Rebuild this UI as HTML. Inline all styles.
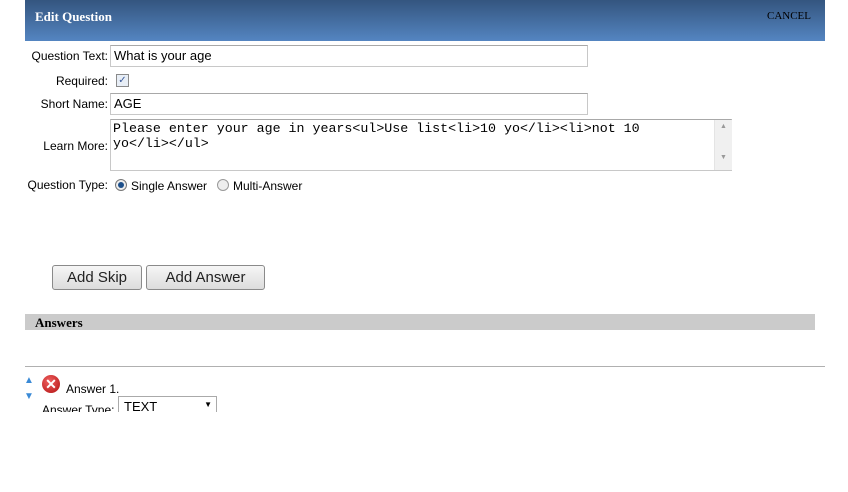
<!DOCTYPE html>
<html><head><style>
body{margin:0;width:848px;height:492px;background:#fff;font-family:"Liberation Sans",Arial,sans-serif;position:relative;overflow:hidden}
.a{position:absolute}
.lbl{position:absolute;right:740px;font-size:12px;color:#000;white-space:nowrap}
.inp{position:absolute;border:1px solid #c8c8c8;border-top-color:#a8a8a8;background:#fff;font-size:13px;box-sizing:border-box;padding:2px 3px}
.btn{position:absolute;border:1px solid #8a8a8a;border-radius:3px;background:linear-gradient(#f6f6f6,#dcdcdc);font-size:15px;color:#222;text-align:center;line-height:23px;box-sizing:border-box}
</style></head><body>
<div class="a" style="left:25px;top:0;width:800px;height:41px;background:linear-gradient(#34557f,#5485c1)"></div>
<div class="a" style="left:35px;top:9px;font-family:'Liberation Serif',serif;font-weight:bold;font-size:13px;color:#fff">Edit Question</div>
<div class="a" style="left:767px;top:10px;font-family:'Liberation Serif',serif;font-size:11px;color:#000">CANCEL</div>

<div class="lbl" style="top:49px">Question Text:</div>
<div class="inp" style="left:110px;top:45px;width:478px;height:22px">What is your age</div>
<div class="lbl" style="top:74px">Required:</div>
<div class="a" style="left:116px;top:74px;width:11px;height:11px;border:1px solid #8a8a8a;background:#e8eef6;font-size:10px;line-height:11px;text-align:center;color:#3a5a9a">✓</div>
<div class="lbl" style="top:97px">Short Name:</div>
<div class="inp" style="left:110px;top:93px;width:478px;height:22px">AGE</div>
<div class="lbl" style="top:139px">Learn More:</div>
<div class="inp" style="left:110px;top:119px;width:622px;height:52px;font-family:'Liberation Mono',monospace;font-size:13.3px;line-height:15px;padding:1px 2px 0 2px">Please enter your age in years&lt;ul&gt;Use list&lt;li&gt;10 yo&lt;/li&gt;&lt;li&gt;not 10<br>yo&lt;/li&gt;&lt;/ul&gt;</div>
<div class="a" style="left:714px;top:120px;width:17px;height:50px;background:#f0f0f0;border-left:1px solid #e4e4e4;font-size:7px;color:#999;text-align:center"><div style="margin-top:3px">▲</div><div style="margin-top:24px">▼</div></div>
<div class="lbl" style="top:178px">Question Type:</div>
<div class="a" style="left:115px;top:179px;width:10px;height:10px;border:1px solid #777;border-radius:50%;background:#eee"><div style="margin:2px;width:6px;height:6px;border-radius:50%;background:#1d4f8a"></div></div>
<div class="a" style="left:131px;top:179px;font-size:12px">Single Answer</div>
<div class="a" style="left:217px;top:179px;width:10px;height:10px;border:1px solid #999;border-radius:50%;background:#eee"></div>
<div class="a" style="left:233px;top:179px;font-size:12px">Multi-Answer</div>

<div class="btn" style="left:52px;top:265px;width:90px;height:25px">Add Skip</div>
<div class="btn" style="left:146px;top:265px;width:119px;height:25px">Add Answer</div>

<div class="a" style="left:25px;top:314px;width:790px;height:16px;background:#cbcbcb"></div>
<div class="a" style="left:35px;top:315px;font-family:'Liberation Serif',serif;font-weight:bold;font-size:13px">Answers</div>
<div class="a" style="left:25px;top:366px;width:800px;height:1px;background:#b0b0b0"></div>
<div class="a" style="left:24px;top:375px;font-size:10px;color:#3a8ad6">▲</div>
<div class="a" style="left:24px;top:391px;font-size:10px;color:#3a8ad6">▼</div>
<div class="a" style="left:42px;top:375px;width:18px;height:18px;border-radius:50%;background:radial-gradient(circle at 40% 35%,#f06060,#b01010);color:#fff;font-size:14px;font-weight:bold;line-height:18px;text-align:center">✕</div>
<div class="a" style="left:66px;top:382px;font-size:12px">Answer 1.</div>
<div class="a" style="left:42px;top:403px;font-size:12px">Answer Type:</div>
<div class="a" style="left:118px;top:396px;width:99px;height:30px;border:1px solid #aaa;background:#fff;box-sizing:border-box;font-size:13px;padding:2px 5px">TEXT<span style="position:absolute;right:4px;top:3px;font-size:8px">▼</span></div>
<div class="a" style="left:0;top:412px;width:848px;height:80px;background:#fff"></div>
</body></html>
